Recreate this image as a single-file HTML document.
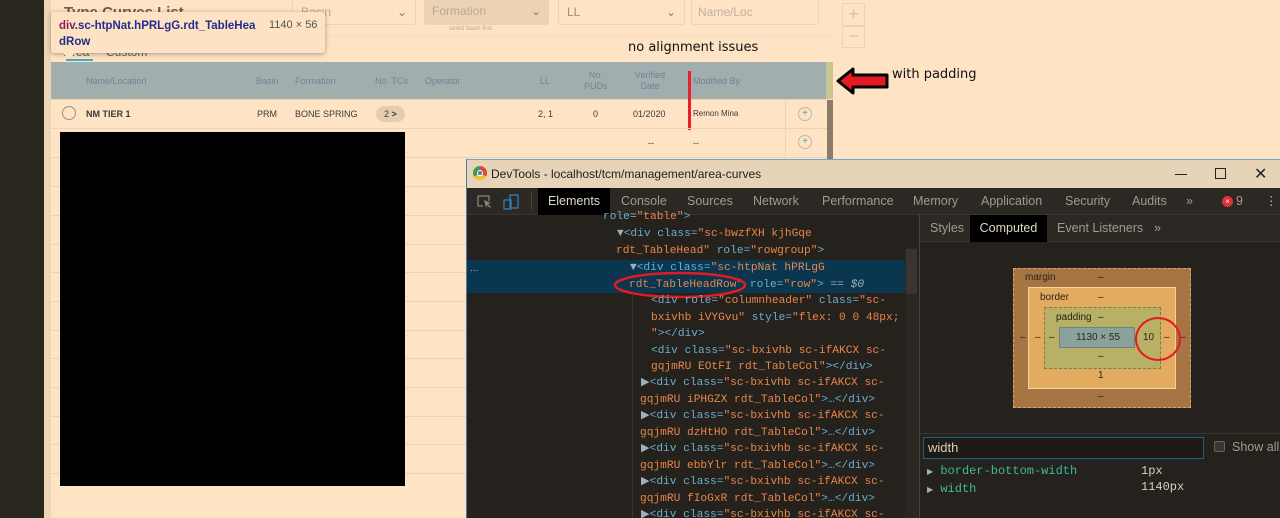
<!DOCTYPE html>
<html><head><meta charset="utf-8">
<style>
*{margin:0;padding:0;box-sizing:border-box}
html{overflow:hidden;width:1280px;height:518px}
body{width:1280px;height:518px;overflow:hidden;background:#fee3c4;position:relative;font-family:"Liberation Sans",sans-serif}
.a{position:absolute}
.hd{color:#6f8497;font-size:9px;position:absolute}
.cell{font-size:9px;color:#3c3a38;position:absolute}
.line{position:absolute;left:51px;width:776px;height:1px;background:#ecd3b6}
.code{position:absolute;font-family:"Liberation Mono",monospace;font-size:11.2px;color:#9fb0bd;white-space:pre;line-height:16.5px}
.t{color:#6aaed0}.v{color:#e8864a}.n{color:#9fb0bd}
.tab{position:absolute;top:188px;height:27px;line-height:27px;font-size:12.5px;color:#a49a8e}
.plus{position:absolute;width:14px;height:14px;border:1px solid #c9b49c;border-radius:50%;color:#3aa8c8;font-size:10px;line-height:12px;text-align:center}
</style></head><body>
<div class="a" style="left:0;top:0;width:44px;height:518px;background:#29251f"></div>
<div class="a" style="left:44px;top:0;width:7px;height:518px;background:#ecd5b5"></div>

<div class="a" style="left:64px;top:4px;font-size:15px;color:#6a5e50;font-weight:bold">Type Curves List</div>
<div class="a" style="left:292px;top:-2px;width:124px;height:27px;border:1px solid #ecd3b6;border-radius:3px;font-size:12px;color:#b7a894;padding:6px 8px">Basin<span style="position:absolute;right:8px;color:#8a7e70">⌄</span></div>
<div class="a" style="left:424px;top:-2px;width:125px;height:27px;background:#ecd3b4;border-radius:3px;font-size:12px;color:#b7a894;padding:6px 8px">Formation<span style="position:absolute;right:8px;color:#8a7e70">⌄</span></div>
<div class="a" style="left:449px;top:26px;font-size:6px;color:#b7a894">select basin first</div>
<div class="a" style="left:558px;top:-2px;width:127px;height:27px;border:1px solid #ecd3b6;border-radius:3px;font-size:12px;color:#9c8e7e;padding:6px 8px">LL<span style="position:absolute;right:8px;color:#8a7e70">⌄</span></div>
<div class="a" style="left:691px;top:-2px;width:128px;height:27px;border:1px solid #ecd3b6;border-radius:3px;font-size:12px;color:#c1b29e;padding:6px 6px">Name/Loc</div>
<div class="a" style="left:842px;top:3px;width:23px;height:23px;border:1px solid #ecd3b6;color:#d4c2ac;text-align:center;font-size:18px;line-height:20px">+</div>
<div class="a" style="left:842px;top:26px;width:23px;height:22px;border:1px solid #ecd3b6;color:#d4c2ac;text-align:center;font-size:18px;line-height:18px">−</div>
<div class="a" style="left:51px;top:36px;width:780px;height:1px;background:#f3dbbe"></div>
<div class="a" style="left:64px;top:45px;font-size:12px;color:#6a5e50">Area</div>
<div class="a" style="left:66px;top:59px;width:27px;height:2px;background:#3aa8c8"></div>
<div class="a" style="left:106px;top:45px;font-size:12px;color:#6a5e50">Custom</div>
<div class="a" style="left:628px;top:40px;color:#111;font-family:'DejaVu Sans',sans-serif;font-size:13px">no alignment issues</div>

<div class="a" style="left:51px;top:62px;width:776px;height:37px;background:#a2aeae"></div>
<div class="a" style="left:826px;top:62px;width:7px;height:37px;background:#c9c690"></div>
<div class="a" style="left:51px;top:99px;width:776px;height:1px;background:#f0cfa0"></div>
<div class="hd" style="left:86px;top:76px">Name/Location</div>
<div class="hd" style="left:256px;top:76px">Basin</div>
<div class="hd" style="left:295px;top:76px">Formation</div>
<div class="hd" style="left:375px;top:76px">No. TCs</div>
<div class="hd" style="left:425px;top:76px">Operator</div>
<div class="hd" style="left:540px;top:76px">LL</div>
<div class="hd" style="left:584px;top:70px;text-align:center;line-height:11px">No.<br>PUDs</div>
<div class="hd" style="left:635px;top:70px;text-align:center;line-height:11px">Verified<br>Date</div>
<div class="hd" style="left:693px;top:76px">Modified By</div>
<div class="a" style="left:688px;top:71px;width:3px;height:59px;background:#e8202a"></div>
<svg class="a" style="left:836px;top:67px" width="54" height="28"><polygon points="2,14 17,2 17,8 51,8 51,20 17,20 17,26" fill="#e41b23" stroke="#000" stroke-width="3" stroke-linejoin="round"/></svg>
<div class="a" style="left:892px;top:67px;font-family:'DejaVu Sans',sans-serif;font-size:13px;color:#111">with padding</div>

<div class="a" style="left:62px;top:106px;width:14px;height:14px;border:1px solid #9a9088;border-radius:50%"></div>
<div class="cell" style="left:86px;top:109px;font-weight:bold">NM TIER 1</div>
<div class="cell" style="left:257px;top:109px">PRM</div>
<div class="cell" style="left:295px;top:109px">BONE SPRING</div>
<div class="a" style="left:376px;top:106px;width:29px;height:16px;background:#e4cdb0;border-radius:8px;font-size:9px;color:#3c3a38;padding:3px 8px">2 <b>&gt;</b></div>
<div class="cell" style="left:538px;top:109px">2, 1</div>
<div class="cell" style="left:593px;top:109px">0</div>
<div class="cell" style="left:633px;top:109px">01/2020</div>
<div class="cell" style="left:693px;top:109px;font-size:8px">Remon Mina</div>
<div class="cell" style="left:648px;top:138px">--</div>
<div class="cell" style="left:693px;top:138px">--</div>
<div class="line" style="top:128px"></div><div class="line" style="top:157px"></div><div class="line" style="top:186px"></div><div class="line" style="top:215px"></div><div class="line" style="top:244px"></div><div class="line" style="top:272px"></div><div class="line" style="top:301px"></div><div class="line" style="top:330px"></div><div class="line" style="top:358px"></div><div class="line" style="top:387px"></div><div class="line" style="top:416px"></div><div class="line" style="top:444px"></div><div class="line" style="top:473px"></div>
<div class="a" style="left:785px;top:100px;width:1px;height:60px;background:#ecd3b6"></div>
<div class="plus" style="left:798px;top:107px">+</div>
<div class="plus" style="left:798px;top:135px">+</div>
<div class="a" style="left:827px;top:100px;width:6px;height:60px;background:#8b7b6b"></div>
<div class="a" style="left:60px;top:132px;width:345px;height:354px;background:#000"></div>

<div class="a" style="left:466px;top:159px;width:814px;height:359px;background:#25211c;border-left:1px solid #3b7fa8;border-top:1px solid #6aa7cb"></div>
<div class="a" style="left:467px;top:160px;width:813px;height:28px;background:#e6d3b8"></div>
<div class="a" style="left:473px;top:166px;width:14px;height:14px;border-radius:50%;background:conic-gradient(#d94a3a 0 33%,#f1c232 0 66%,#3f9d4a 0);"></div>
<div class="a" style="left:477px;top:170px;width:6px;height:6px;border-radius:50%;background:#3d7ec8;border:1px solid #fff"></div>
<div class="a" style="left:491px;top:167px;font-size:12px;color:#222">DevTools - localhost/tcm/management/area-curves</div>
<div class="a" style="left:1175px;top:174px;width:12px;height:1px;background:#222"></div>
<div class="a" style="left:1215px;top:168px;width:11px;height:11px;border:1px solid #222"></div>
<div class="a" style="left:1254px;top:164px;font-size:16px;color:#222">✕</div>
<div class="a" style="left:467px;top:188px;width:813px;height:27px;background:#2c2823;border-bottom:1px solid #3a352f"></div>
<svg class="a" style="left:476px;top:194px" width="44" height="16"><path d="M7 12H2V2h11v5" fill="none" stroke="#8a8278" stroke-width="1.3"/><path d="M8 6l7 3-3 1 3 3-1 1-3-3-1 3z" fill="#8a8278"/><rect x="34" y="1" width="8" height="13" fill="none" stroke="#2f7eb8" stroke-width="1.3"/><rect x="28" y="6" width="7" height="9" fill="none" stroke="#2f7eb8" stroke-width="1.3"/></svg>
<div class="a" style="left:531px;top:192px;width:1px;height:18px;background:#4a443d"></div>
<div class="tab" style="left:538px;width:72px;background:#000;color:#e0d6c8;text-align:center">Elements</div>
<div class="tab" style="left:621px">Console</div>
<div class="tab" style="left:687px">Sources</div>
<div class="tab" style="left:753px">Network</div>
<div class="tab" style="left:822px">Performance</div>
<div class="tab" style="left:913px">Memory</div>
<div class="tab" style="left:981px">Application</div>
<div class="tab" style="left:1065px">Security</div>
<div class="tab" style="left:1132px">Audits</div>
<div class="tab" style="left:1186px">»</div>
<div class="a" style="left:1222px;top:196px;width:11px;height:11px;border-radius:50%;background:#e0303a;color:#fff;font-size:8px;text-align:center;line-height:11px">×</div>
<div class="tab" style="left:1236px">9</div>
<div class="tab" style="left:1265px;color:#c0b6aa">⋮</div>

<div class="a" style="left:467px;top:260px;width:438px;height:33px;background:#0b3650"></div>
<div class="a" style="left:470px;top:263px;font-size:10px;color:#9fb0bd">...</div>
<div class="code" style="left:603px;top:209px"><span class="t">role</span><span class="n">=</span><span class="v">"table"</span><span class="t">&gt;</span></div>
<div class="code" style="left:617px;top:226px"><span class="n">▼</span><span class="t">&lt;div class=</span><span class="v">"sc-bwzfXH kjhGqe</span></div>
<div class="code" style="left:616px;top:243px"><span class="v">rdt_TableHead"</span> <span class="t">role=</span><span class="v">"rowgroup"</span><span class="t">&gt;</span></div>
<div class="code" style="left:630px;top:260px"><span class="n">▼</span><span class="t">&lt;div class=</span><span class="v">"sc-htpNat hPRLgG</span></div>
<div class="code" style="left:629px;top:277px"><span class="v">rdt_TableHeadRow"</span> <span class="t">role=</span><span class="v">"row"</span><span class="t">&gt;</span> <span class="n">== <i>$0</i></span></div>
<svg class="a" style="left:612px;top:270px" width="140" height="30"><ellipse cx="68" cy="15" rx="65" ry="12" fill="none" stroke="#e21b23" stroke-width="2.5"/></svg>
<div class="code" style="left:651px;top:293px"><span class="t">&lt;div role=</span><span class="v">"columnheader"</span> <span class="t">class=</span><span class="v">"sc-</span>
<span class="v">bxivhb iVYGvu"</span> <span class="t">style=</span><span class="v">"flex: 0 0 48px;</span>
<span class="v">"</span><span class="t">&gt;&lt;/div&gt;</span>
<span class="t">&lt;div class=</span><span class="v">"sc-bxivhb sc-ifAKCX sc-</span>
<span class="v">gqjmRU EOtFI rdt_TableCol"</span><span class="t">&gt;&lt;/div&gt;</span></div>
<div class="code" style="left:641px;top:375px"><span class="n">▶</span><span class="t">&lt;div class=</span><span class="v">"sc-bxivhb sc-ifAKCX sc-</span></div>
<div class="code" style="left:640px;top:392px"><span class="v">gqjmRU iPHGZX rdt_TableCol"</span><span class="t">&gt;…&lt;/div&gt;</span></div>
<div class="code" style="left:641px;top:408px"><span class="n">▶</span><span class="t">&lt;div class=</span><span class="v">"sc-bxivhb sc-ifAKCX sc-</span></div>
<div class="code" style="left:640px;top:425px"><span class="v">gqjmRU dzHtHO rdt_TableCol"</span><span class="t">&gt;…&lt;/div&gt;</span></div>
<div class="code" style="left:641px;top:441px"><span class="n">▶</span><span class="t">&lt;div class=</span><span class="v">"sc-bxivhb sc-ifAKCX sc-</span></div>
<div class="code" style="left:640px;top:458px"><span class="v">gqjmRU ebbYlr rdt_TableCol"</span><span class="t">&gt;…&lt;/div&gt;</span></div>
<div class="code" style="left:641px;top:474px"><span class="n">▶</span><span class="t">&lt;div class=</span><span class="v">"sc-bxivhb sc-ifAKCX sc-</span></div>
<div class="code" style="left:640px;top:491px"><span class="v">gqjmRU fIoGxR rdt_TableCol"</span><span class="t">&gt;…&lt;/div&gt;</span></div>
<div class="code" style="left:641px;top:507px"><span class="n">▶</span><span class="t">&lt;div class=</span><span class="v">"sc-bxivhb sc-ifAKCX sc-</span></div>
<div class="a" style="left:632px;top:293px;width:1px;height:225px;background:#3a352f"></div>
<div class="a" style="left:905px;top:248px;width:13px;height:270px;background:#2a2621"></div>
<div class="a" style="left:906px;top:249px;width:11px;height:45px;background:#3a3530;border-radius:2px"></div>
<div class="a" style="left:919px;top:215px;width:1px;height:303px;background:#4a443d"></div>

<div class="a" style="left:920px;top:215px;width:360px;height:27px;background:#2c2823;border-bottom:1px solid #3a352f"></div>
<div class="tab" style="left:930px;top:215px">Styles</div>
<div class="tab" style="left:970px;top:215px;width:77px;background:#000;color:#e0d6c8;text-align:center">Computed</div>
<div class="tab" style="left:1057px;top:215px">Event Listeners</div>
<div class="tab" style="left:1154px;top:215px">»</div>
<div class="a" style="left:1013px;top:268px;width:178px;height:140px;background:#a77443;border:1px dashed #d6a46c"></div>
<div class="a" style="left:1028px;top:287px;width:148px;height:102px;background:#e2ab5f;border:1px solid #f3d39e"></div>
<div class="a" style="left:1044px;top:307px;width:117px;height:62px;background:#b8b064;border:1px dashed #7f7a48"></div>
<div class="a" style="left:1059px;top:327px;width:76px;height:21px;background:#8aa29c;border:1px solid #6f8480"></div>
<div class="a" style="left:1025px;top:272px;font-size:10px;color:#2a2418">margin</div>
<div class="a" style="left:1040px;top:292px;font-size:10px;color:#2a2418">border</div>
<div class="a" style="left:1056px;top:312px;font-size:10px;color:#2a2418">padding</div>
<div class="a" style="left:1076px;top:332px;font-size:10px;color:#2a2418">1130 × 55</div>
<div class="a" style="left:1143px;top:332px;font-size:10px;color:#2a2418">10</div>
<div class="a" style="left:1098px;top:391px;font-size:10px;color:#2a2418">–</div>
<div class="a" style="left:1098px;top:370px;font-size:10px;color:#2a2418">1</div>
<div class="a" style="left:1098px;top:351px;font-size:10px;color:#2a2418">–</div>
<div class="a" style="left:1098px;top:272px;font-size:10px;color:#2a2418">–</div>
<div class="a" style="left:1098px;top:292px;font-size:10px;color:#2a2418">–</div>
<div class="a" style="left:1098px;top:312px;font-size:10px;color:#2a2418">–</div>
<div class="a" style="left:1020px;top:332px;font-size:10px;color:#2a2418">–</div>
<div class="a" style="left:1035px;top:332px;font-size:10px;color:#2a2418">–</div>
<div class="a" style="left:1049px;top:332px;font-size:10px;color:#2a2418">–</div>
<div class="a" style="left:1164px;top:332px;font-size:10px;color:#2a2418">–</div>
<div class="a" style="left:1180px;top:332px;font-size:10px;color:#2a2418">–</div>
<div class="a" style="left:1135px;top:317px;width:46px;height:44px;border:2.5px solid #e21b23;border-radius:50%"></div>
<div class="a" style="left:920px;top:433px;width:360px;height:1px;background:#3a352f"></div>
<div class="a" style="left:923px;top:437px;width:281px;height:22px;border:1px solid #1f5f86;background:#1e1a15;color:#d8cec0;font-size:13px;padding:2px 4px">width</div>
<div class="a" style="left:1214px;top:441px;width:11px;height:11px;border:1px solid #6a645c;border-radius:2px;background:#3a352f"></div>
<div class="a" style="left:1232px;top:440px;font-size:12.5px;color:#a49a8e">Show all</div>
<div class="code" style="left:927px;top:463px;font-size:12px;line-height:16px"><span class="n" style="font-size:8px">▶</span> <span style="color:#3fb8a0">border-bottom-width</span>
<span class="n" style="font-size:8px">▶</span> <span style="color:#3fb8a0">width</span></div>
<div class="code" style="left:1141px;top:463px;font-size:12px;line-height:16px;color:#d8cec0">1px
1140px</div>

<div class="a" style="left:51px;top:12px;width:274px;height:41px;background:#fde3c4;border-radius:3px;box-shadow:0 1px 5px rgba(0,0,0,.35)"></div>
<div class="a" style="left:59px;top:18px;font-size:11.5px;font-weight:bold;color:#252c8a;line-height:16px">
<span style="color:#8a1c5a">div</span>.sc-htpNat.hPRLgG.rdt_TableHea<br>dRow</div>
<div class="a" style="left:269px;top:19px;font-size:11px;color:#555">1140 × 56</div>
<div class="a" style="left:62px;top:52px;width:0;height:0;border-left:7px solid transparent;border-right:7px solid transparent;border-top:7px solid #fde3c4"></div>
</body></html>
